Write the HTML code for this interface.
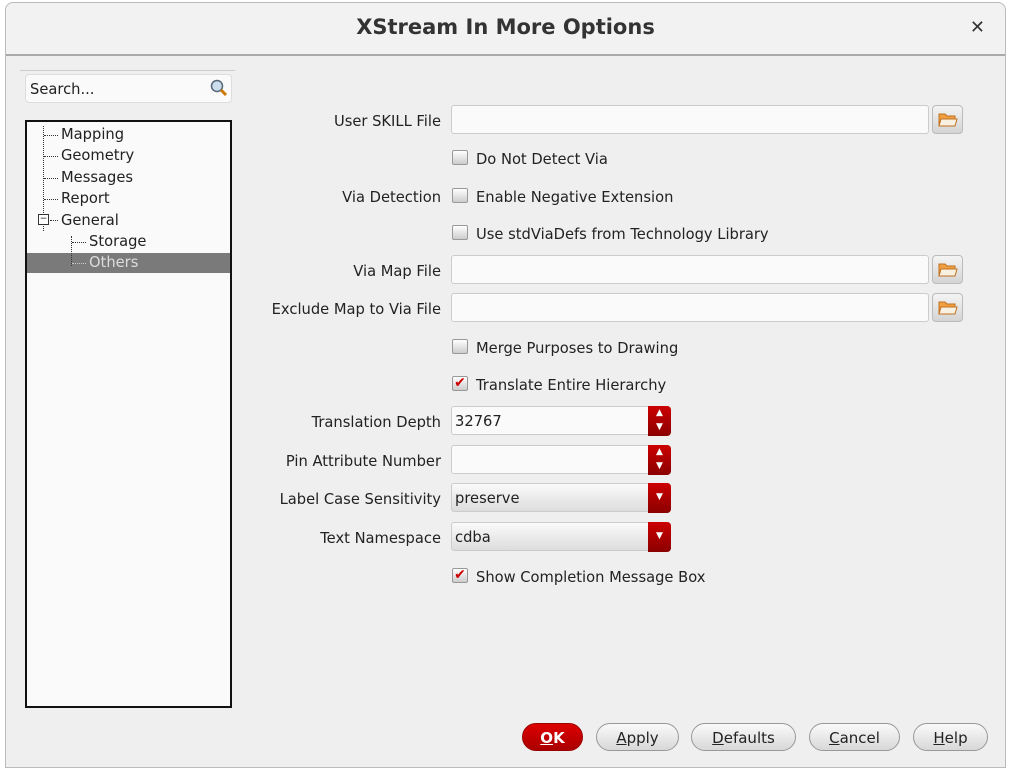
<!DOCTYPE html>
<html><head><style>
body{margin:0;width:1013px;height:772px;background:#fff;font-family:"DejaVu Sans","Liberation Sans",sans-serif;font-size:14.7px;color:#222;position:relative;overflow:hidden}
.win{position:absolute;left:5px;top:2px;width:1001px;height:766px;background:#efefef;border:1px solid #bbb;border-radius:8px 8px 0 0;box-sizing:border-box}
.title{position:absolute;left:0;top:0;right:0;height:51px;border-bottom:2px solid #aaa;background:#f2f2f2;border-radius:8px 8px 0 0}
.title span{position:absolute;left:0;right:0;top:12px;text-align:center;font-weight:bold;font-size:21px;color:#333}
.a{position:absolute}
.lbl{position:absolute;right:572px;text-align:right;white-space:nowrap;margin-top:2px}
.inp{position:absolute;left:451px;height:29px;background:#fafafa;border:1px solid #ccc;border-radius:3px;box-sizing:border-box}
.fb{position:absolute;left:932px;width:31px;height:29px;border:1px solid #bbb;border-radius:4px;background:linear-gradient(#f4f4f4,#d4d4d4);box-sizing:border-box}
.fb svg{position:absolute;left:5px;top:6px}
.cb{position:absolute;left:452px;width:16px;height:15px;border:1px solid #999;border-radius:2px;background:linear-gradient(#fff,#ccc);box-sizing:border-box;margin-top:1px}
.ct{position:absolute;left:476px;white-space:nowrap;margin-top:2px}
.red{position:absolute;left:648px;width:23px;height:30px;background:linear-gradient(#c00,#8a0000);border-radius:0 4px 4px 0;color:#fff;font-size:9px;text-align:center}
.btn{position:absolute;top:723px;height:28px;border:1px solid #999;border-radius:14px;background:linear-gradient(#fafafa,#d8d8d8);text-align:center;line-height:28px;font-size:15px;box-sizing:border-box}
.tree div{position:absolute;white-space:nowrap}
.tv{margin-top:2px}
</style></head><body>
<div class="win">
<div class="title"><span>XStream In More Options</span><span style="left:auto;right:20px;top:14px;font-size:18px">✕</span></div>
</div>
<div class="a" style="left:20px;top:70px;width:215px;height:1px;background:#ccc"></div>
<div class="a" style="left:25px;top:74px;width:207px;height:29px;background:#fafafa;border:1px solid #ddd;border-radius:4px;box-sizing:border-box;padding:6px 4px">Search...</div>
<svg class="a" style="left:209px;top:78px" width="20" height="20"><circle cx="8" cy="8" r="5.5" fill="#cde" stroke="#567" stroke-width="1.5"/><line x1="12" y1="12" x2="17" y2="17" stroke="#c70" stroke-width="3"/></svg>
<div class="a tree" style="left:25px;top:120px;width:207px;height:588px;border:2px solid #111;background:#fafafa;box-sizing:border-box">
<div style="left:0;right:0;top:131px;height:20px;background:#7a7a7a"></div>
<div style="left:16px;top:4px;height:105px;border-left:1px dotted #333"></div>
<div style="left:44px;top:114px;height:30px;border-left:1px dotted #333"></div>
<div style="left:17px;top:13px;width:14px;border-top:1px dotted #333"></div>
<div style="left:17px;top:34px;width:14px;border-top:1px dotted #333"></div>
<div style="left:17px;top:56px;width:14px;border-top:1px dotted #333"></div>
<div style="left:17px;top:77px;width:14px;border-top:1px dotted #333"></div>
<div style="left:45px;top:120px;width:14px;border-top:1px dotted #333"></div>
<div style="left:45px;top:141px;width:14px;border-top:1px dotted #ccc"></div>
<div style="left:11px;top:92px;width:9px;height:9px;border:1px solid #333;background:#fff;font-size:9px;line-height:8px;text-align:center">−</div>
<div style="left:23px;top:98px;width:8px;border-top:1px dotted #333"></div>
<div class="tv" style="left:34px;top:2px">Mapping</div>
<div class="tv" style="left:34px;top:23px">Geometry</div>
<div class="tv" style="left:34px;top:45px">Messages</div>
<div class="tv" style="left:34px;top:66px">Report</div>
<div class="tv" style="left:34px;top:88px">General</div>
<div class="tv" style="left:62px;top:109px">Storage</div>
<div class="tv" style="left:62px;top:130px;color:#ddd">Others</div>
</div>

<div class="lbl" style="top:111px">User SKILL File</div>
<div class="inp" style="top:105px;width:478px"></div>
<div class="fb" style="top:105px"><svg width="20" height="16"><path d="M1 2h6l2 2h8v10H1z" fill="#f0a040" stroke="#c07020"/><path d="M3 7h16l-2 7H1z" fill="#f8f0e0" stroke="#c07020"/></svg></div>
<div class="cb" style="top:149px"></div><div class="ct" style="top:149px">Do Not Detect Via</div>
<div class="lbl" style="top:187px">Via Detection</div>
<div class="cb" style="top:187px"></div><div class="ct" style="top:187px">Enable Negative Extension</div>
<div class="cb" style="top:224px"></div><div class="ct" style="top:224px">Use stdViaDefs from Technology Library</div>
<div class="lbl" style="top:261px">Via Map File</div>
<div class="inp" style="top:255px;width:478px"></div><div class="fb" style="top:255px"><svg width="20" height="16"><path d="M1 2h6l2 2h8v10H1z" fill="#f0a040" stroke="#c07020"/><path d="M3 7h16l-2 7H1z" fill="#f8f0e0" stroke="#c07020"/></svg></div>
<div class="lbl" style="top:299px">Exclude Map to Via File</div>
<div class="inp" style="top:293px;width:478px"></div><div class="fb" style="top:293px"><svg width="20" height="16"><path d="M1 2h6l2 2h8v10H1z" fill="#f0a040" stroke="#c07020"/><path d="M3 7h16l-2 7H1z" fill="#f8f0e0" stroke="#c07020"/></svg></div>
<div class="cb" style="top:338px"></div><div class="ct" style="top:338px">Merge Purposes to Drawing</div>
<div class="cb" style="top:375px;color:#c00;font-size:14px;line-height:13px;text-align:center">✔</div><div class="ct" style="top:375px">Translate Entire Hierarchy</div>
<div class="lbl" style="top:412px">Translation Depth</div>
<div class="inp" style="top:406px;width:220px;padding:6px 3px">32767</div><div class="red" style="top:406px;line-height:14px">▲<br>▼</div>
<div class="lbl" style="top:451px">Pin Attribute Number</div>
<div class="inp" style="top:445px;width:220px"></div><div class="red" style="top:445px;line-height:14px">▲<br>▼</div>
<div class="lbl" style="top:489px">Label Case Sensitivity</div>
<div class="inp" style="top:483px;width:220px;padding:6px 3px;background:linear-gradient(#fafafa,#ddd)">preserve</div><div class="red" style="top:483px;line-height:28px">▼</div>
<div class="lbl" style="top:528px">Text Namespace</div>
<div class="inp" style="top:522px;width:220px;padding:6px 3px;background:linear-gradient(#fafafa,#ddd)">cdba</div><div class="red" style="top:522px;line-height:28px">▼</div>
<div class="cb" style="top:567px;color:#c00;font-size:14px;line-height:13px;text-align:center">✔</div><div class="ct" style="top:567px">Show Completion Message Box</div>

<div class="btn" style="left:522px;width:61px;background:linear-gradient(#d00,#a00);border-color:#900;color:#fff;font-weight:bold"><u>O</u>K</div>
<div class="btn" style="left:596px;width:83px"><u>A</u>pply</div>
<div class="btn" style="left:691px;width:105px"><u>D</u>efaults</div>
<div class="btn" style="left:809px;width:91px"><u>C</u>ancel</div>
<div class="btn" style="left:913px;width:75px"><u>H</u>elp</div>
</body></html>
